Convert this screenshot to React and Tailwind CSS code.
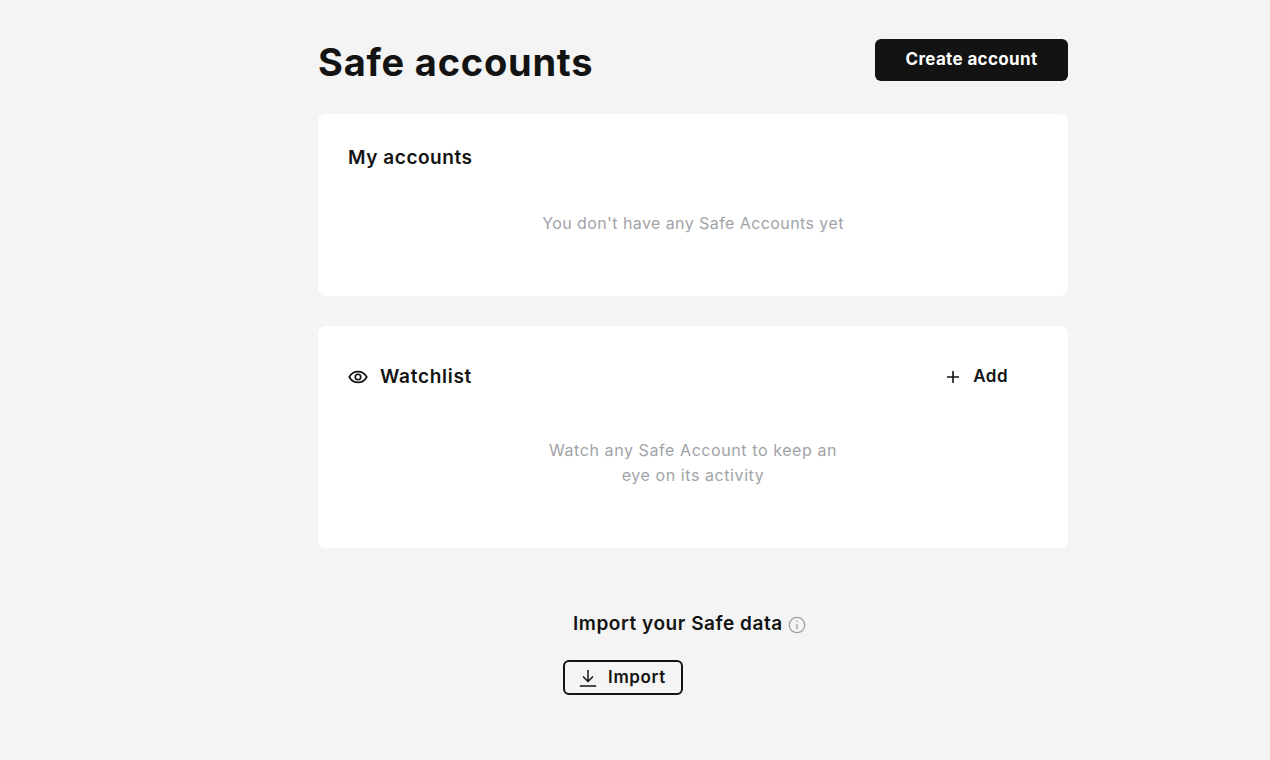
import React from 'react';

const EyeIcon = () => (
  <svg width="20" height="20" viewBox="0 0 24 24" fill="none" stroke="#121312" strokeWidth="2">
    <path d="M1.5 12C4 7.5 7.6 5.5 12 5.5s8 2 10.5 6.5c-2.5 4.5-6.100 6.500-10.500 6.500S4 16.500 1.500 12z" />
    <circle cx="12" cy="12" r="3.300" />
  </svg>
);

const PlusIcon = () => (
  <svg width="14" height="14" viewBox="0 0 14 14" fill="none" stroke="#121312" strokeWidth="1.6">
    <path d="M7 1v12M1 7h12" />
  </svg>
);

const InfoIcon = () => (
  <svg width="18" height="18" viewBox="0 0 18 18" fill="none" stroke="#a1a3a7" strokeWidth="1.300" className="mt-[2px]">
    <circle cx="9" cy="9" r="7.700" />
    <path d="M9 8v5.200M9 4.800v1.400" />
  </svg>
);

const ImportIcon = () => (
  <svg width="18" height="18" viewBox="0 0 18 18" fill="none" stroke="#121312" strokeWidth="1.500">
    <path d="M9 1v11M4 7.500l5 5 5-5M.8 17h16.400" />
  </svg>
);

const App = () => {
  return (
    <div className="h-screen overflow-hidden bg-[#f4f4f4] text-[#121312] font-['Inter','Liberation_Sans',sans-serif]">
      <div className="ml-[318px] w-[750px] pt-[39px]">
        <div className="flex items-start justify-between mb-[29px]">
          <h1 className="text-[38px] leading-[46px] font-bold tracking-[0.78px]">Safe accounts</h1>
          <button className="w-[193px] h-[42px] rounded-md bg-[#121312] text-white text-[17px] font-bold tracking-[0.35px]">
            Create account
          </button>
        </div>

        <div className="bg-white rounded-lg h-[182px] px-[30px] pt-[30px] mb-[30px]">
          <h2 className="text-[19px] leading-[28px] font-semibold tracking-[0.55px]">My accounts</h2>
          <p className="mt-[37px] text-center text-[16px] leading-[28px] tracking-[0.42px] text-[#a1a3a7]">
            You don't have any Safe Accounts yet
          </p>
        </div>

        <div className="bg-white rounded-lg h-[222px] px-[30px] pt-[37px] mb-[62px]">
          <div className="flex items-center justify-between h-[28px]">
            <div className="flex items-center gap-[12px]">
              <EyeIcon />
              <h2 className="text-[19px] leading-[28px] font-semibold tracking-[0.72px]">Watchlist</h2>
            </div>
            <div className="flex items-center gap-[13px] mr-[30px]">
              <PlusIcon />
              <span className="text-[17px] font-semibold tracking-[0.5px]">Add</span>
            </div>
          </div>
          <p className="mt-[47px] mx-auto w-[320px] px-[10px] text-center text-[16px] leading-[25px] tracking-[0.58px] text-[#a1a3a7]">
            Watch any Safe Account to keep an eye on its activity
          </p>
        </div>

        <div className="flex flex-col items-start pl-[245px]">
          <div className="flex items-center gap-[5px] h-[28px] ml-[10px]">
            <span className="text-[19px] font-semibold tracking-[0.55px]">Import your Safe data</span>
            <InfoIcon />
          </div>
          <button className="mt-[22px] w-[120px] h-[35px] pr-[1px] flex items-center justify-center gap-[11px] rounded-md border-2 border-[#121312] text-[17px] font-semibold tracking-[0.65px]">
            <ImportIcon />
            Import
          </button>
        </div>
      </div>
    </div>
  );
};

export default App;
